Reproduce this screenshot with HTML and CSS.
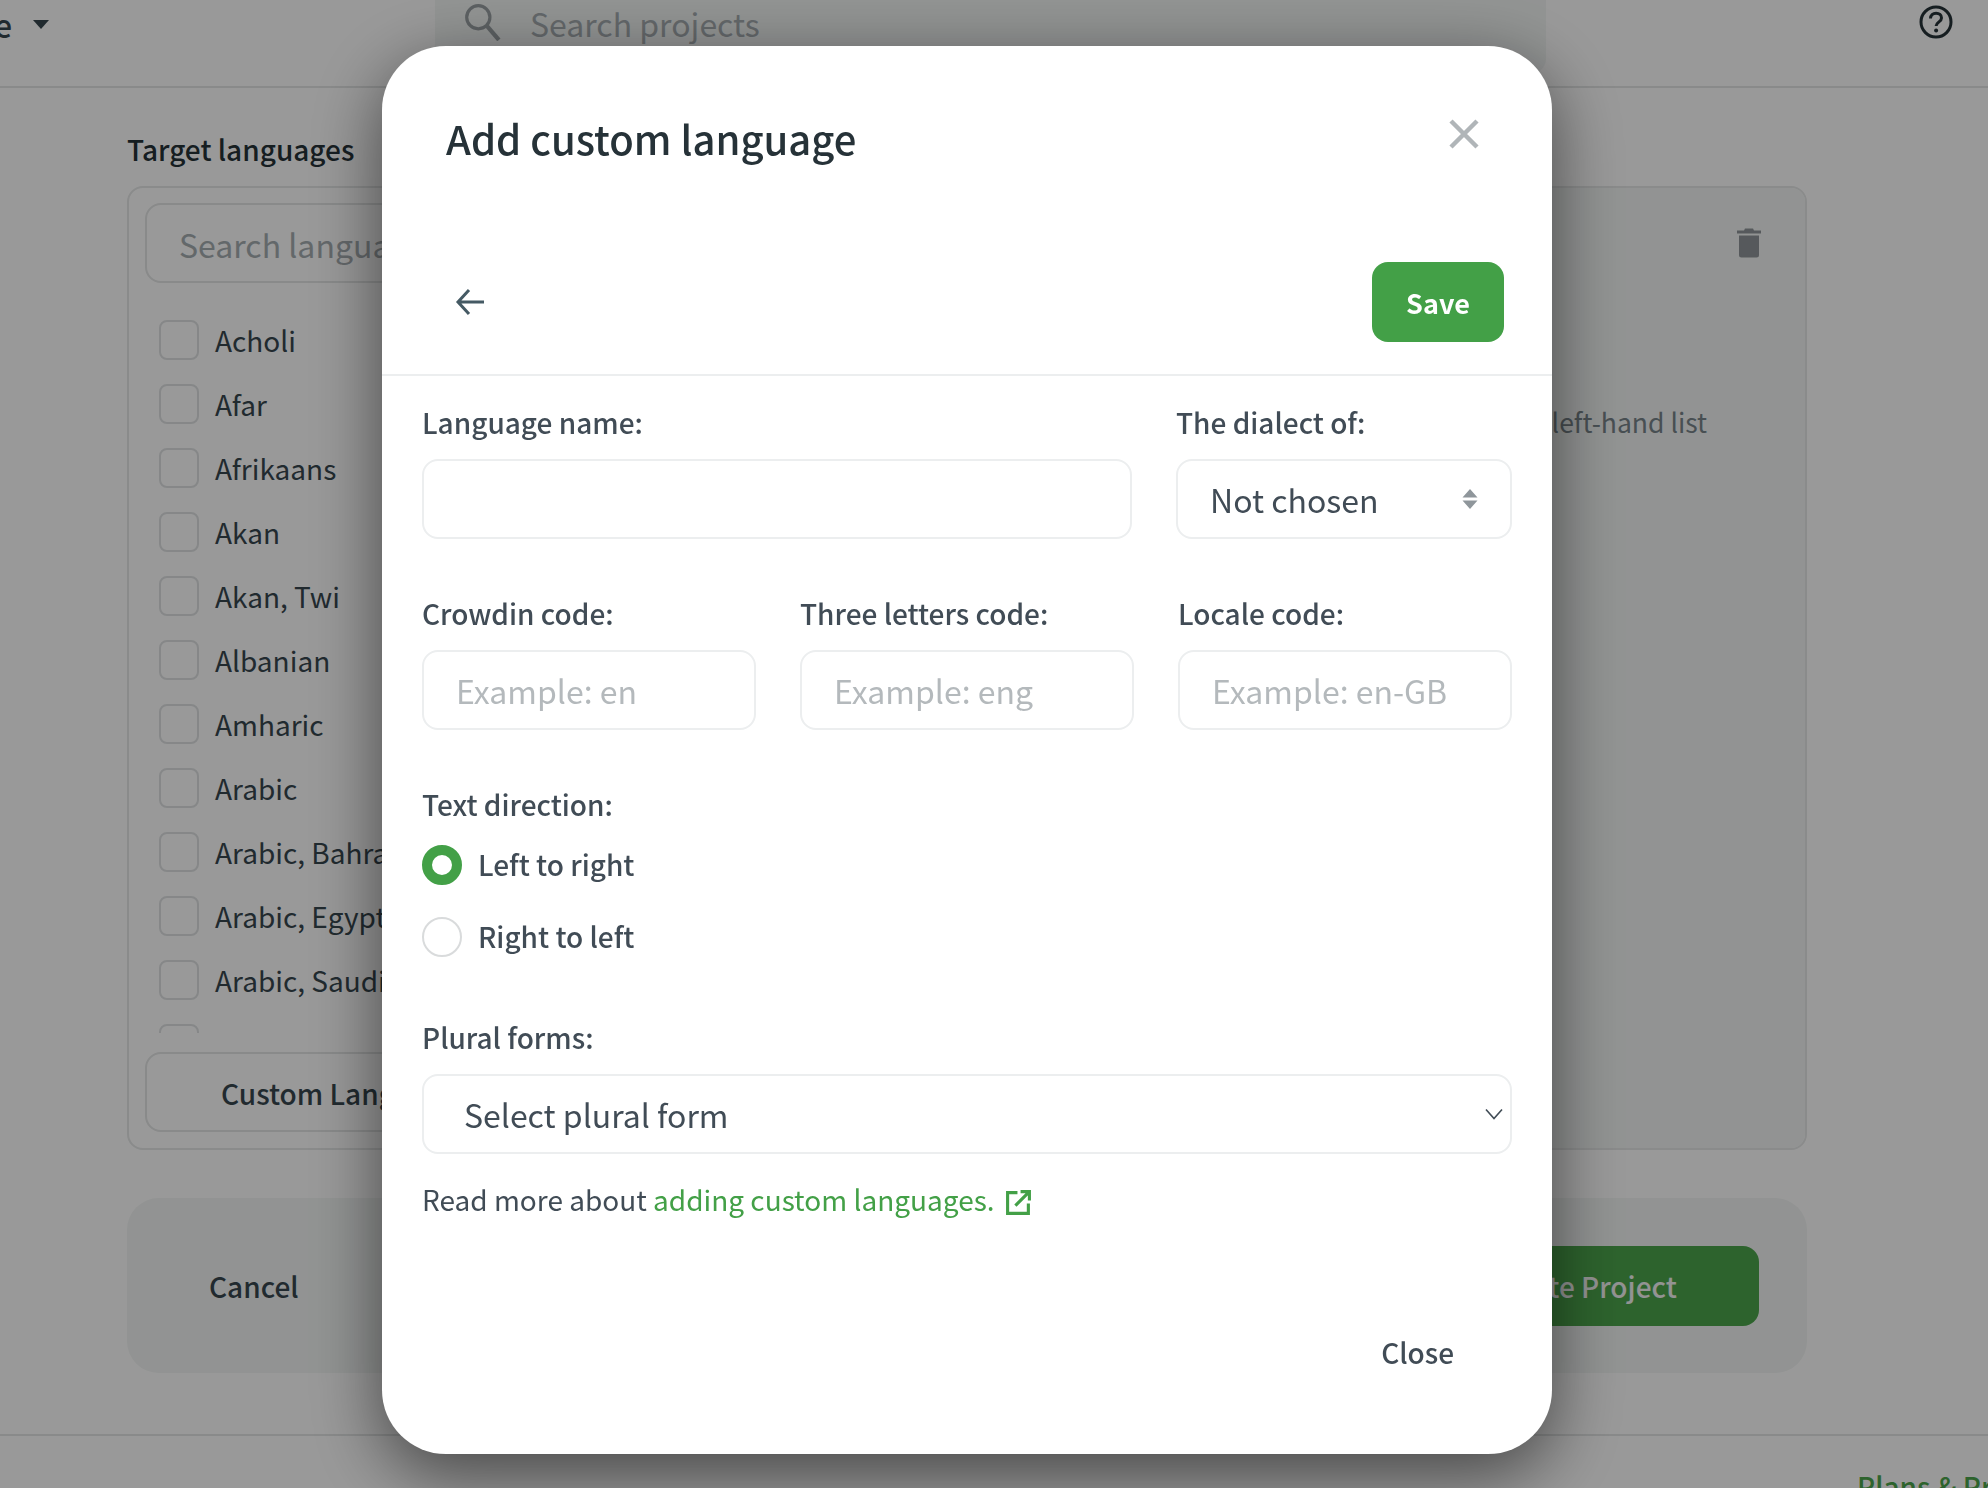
FILE: index.html
```html
<!DOCTYPE html>
<html lang="en">
<head>
<meta charset="utf-8">
<title>Add custom language</title>
<link rel="stylesheet" href="styles.css">
</head>
<body>
<div class="page">
  <header class="topbar">
    <div class="lang-menu"><span class="lang-text">e</span><span class="caret"></span></div>
    <div class="project-search">
      <svg class="search-icon" viewBox="0 0 36 36"><circle cx="14.5" cy="13.5" r="11" fill="none" stroke="currentColor" stroke-width="3"/><path d="M22 21l12 14" fill="none" stroke="currentColor" stroke-width="4"/></svg>
      <span>Search projects</span>
    </div>
    <svg class="help-icon" viewBox="0 0 34 34"><circle cx="17" cy="17" r="15" fill="none" stroke="currentColor" stroke-width="3"/><path d="M11.5 13.5c0-3.2 2.4-5.3 5.6-5.3 3.1 0 5.4 1.9 5.4 4.7 0 4.200-5.400 4.300-5.400 8.100" fill="none" stroke="currentColor" stroke-width="3"/><circle cx="17.100" cy="25.500" r="2" fill="currentColor"/></svg>
  </header>
  <main class="content">
    <h2 class="section-title">Target languages</h2>
    <section class="lang-panel">
      <div class="lang-col">
        <div class="lang-search">Search languages</div>
        <ul class="lang-list">
          <li><span class="box"></span>Acholi</li>
          <li><span class="box"></span>Afar</li>
          <li><span class="box"></span>Afrikaans</li>
          <li><span class="box"></span>Akan</li>
          <li><span class="box"></span>Akan, Twi</li>
          <li><span class="box"></span>Albanian</li>
          <li><span class="box"></span>Amharic</li>
          <li><span class="box"></span>Arabic</li>
          <li><span class="box"></span>Arabic, Bahrain</li>
          <li><span class="box"></span>Arabic, Egypt</li>
          <li><span class="box"></span>Arabic, Saudi Arabia</li>
          <li><span class="box"></span>Arabic, UAE</li>
        </ul>
        <div class="custom-btn">Custom Languages</div>
      </div>
      <div class="selected-col">
        <svg class="trash" viewBox="0 0 26 32"><path d="M9 2.500h8l1 2h7v3H1v-3h7zM3 9.500h20V29a2.500 2.500 0 0 1-2.500 2.500h-15A2.500 2.500 0 0 1 3 29z" fill="currentColor"/></svg>
        <p class="selected-hint">Select languages from the left-hand list</p>
      </div>
    </section>
    <div class="actions">
      <span class="cancel">Cancel</span>
      <span class="create">Create Project</span>
    </div>
  </main>
  <footer class="footer"><span class="plans">Plans &amp; Pricing</span></footer>
</div>

<div class="overlay"></div>

<div class="modal">
  <div class="modal-head">
    <h1 class="modal-title">Add custom language</h1>
    <svg class="modal-x" viewBox="0 0 30 30"><path d="M2 2l26 26M28 2L2 28" fill="none" stroke="currentColor" stroke-width="4.500"/></svg>
  </div>
  <div class="modal-tools">
    <svg class="back" viewBox="0 0 30 30"><path d="M29 15H3M14 3L3 15l11 12" fill="none" stroke="currentColor" stroke-width="3"/></svg>
    <span class="save">Save</span>
  </div>
  <form class="form">
    <div class="row-name">
      <div class="field"><label class="label">Language name:</label><div class="input"></div></div>
      <div class="field"><label class="label">The dialect of:</label>
        <div class="input value">Not chosen
          <svg class="updown" viewBox="0 0 16 20"><path d="M8 0l7.500 8.500H.5zM8 20l-7.500-8.500h15z" fill="currentColor"/></svg>
        </div>
      </div>
    </div>
    <div class="row-codes">
      <div class="field"><label class="label">Crowdin code:</label><div class="input ph">Example: en</div></div>
      <div class="field"><label class="label">Three letters code:</label><div class="input ph">Example: eng</div></div>
      <div class="field"><label class="label">Locale code:</label><div class="input ph">Example: en-GB</div></div>
    </div>
    <div class="direction">
      <div class="label">Text direction:</div>
      <div class="radio-row first"><span class="radio on"></span><span class="radio-text">Left to right</span></div>
      <div class="radio-row"><span class="radio"></span><span class="radio-text">Right to left</span></div>
    </div>
    <div class="plural">
      <label class="label">Plural forms:</label>
      <div class="input value wide">Select plural form
        <svg class="chev" viewBox="0 0 18 12"><path d="M1 1.500l8 9 8-9" fill="none" stroke="currentColor" stroke-width="1.600"/></svg>
      </div>
    </div>
    <p class="more">Read more about <a class="link">adding custom languages.</a>
      <svg class="ext" viewBox="0 0 26 26"><path d="M12 3.500H2.500v20h20V14M10 16L23 3M15 2.500h8.500V11" fill="none" stroke="currentColor" stroke-width="3"/></svg>
    </p>
  </form>
  <div class="modal-foot"><span class="close-btn">Close</span></div>
</div>
</body>
</html>
```
FILE: styles.css
```css
* { box-sizing: border-box; }
html, body { margin: 0; height: 1488px; overflow: hidden; }
body { font-family: "Noto Sans CJK SC", "Noto Sans", sans-serif; color: #37474f; background: #fff; }

.page { height: 1488px; display: flex; flex-direction: column; overflow: hidden; }

/* top bar */
.topbar { height: 88px; flex: none; display: flex; align-items: flex-start; border-bottom: 2px solid #e4e6e6; }
.lang-menu { width: 435px; display: flex; align-items: flex-start; gap: 20px; height: 50px; font-size: 32px; font-weight: 500; line-height: 48px; text-indent: -6px; }
.lang-text { color: #37474f; }
.caret { width: 0; height: 0; margin: 20px 0 0 1px; border-left: 8px solid transparent; border-right: 8px solid transparent; border-top: 9px solid #37474f; }
.project-search { width: 1111px; height: 73px; background: #f3f6f5; border-radius: 0 0 14px 14px; display: flex; align-items: flex-start; gap: 29px; padding-left: 28px; font-size: 32px; line-height: 46px; color: #a6adb1; }
.search-icon { width: 38px; height: 38px; margin-top: 3px; color: #9aa1a4; flex: none; }
.help-icon { width: 34px; height: 34px; margin: 5px 0 0 373px; color: #263238; flex: none; }

/* page content */
.content { flex: 1; padding: 0 181px 0 127px; display: flex; flex-direction: column; }
.section-title { margin: 41px 0 17px; font-size: 28px; line-height: 40px; font-weight: 500; color: #263238; }
.lang-panel { height: 964px; flex: none; display: flex; border: 2px solid #e6e8e8; border-radius: 16px; overflow: hidden; }
.lang-col { width: 430px; flex: none; padding: 15px 16px 16px; display: flex; flex-direction: column; }
.lang-search { height: 80px; flex: none; border: 2px solid #e4e6e6; border-radius: 16px; padding-left: 32px; font-size: 32px; line-height: 78px; color: #a6adb1; }
.lang-list { list-style: none; margin: 37px 0 0; padding: 0 0 0 14px; height: 713px; overflow: hidden; flex: none; }
.lang-list li { height: 64px; display: flex; align-items: flex-start; gap: 16px; font-size: 28px; line-height: 40px; color: #37474f; }
.box { width: 40px; height: 40px; flex: none; border: 2px solid #dfe2e3; border-radius: 8px; background: #fff; }
.custom-btn { height: 80px; flex: none; margin-top: 19px; border: 2px solid #e4e6e6; border-radius: 16px; padding-left: 74px; font-size: 28px; line-height: 78px; font-weight: 500; color: #37474f; white-space: nowrap; overflow: hidden; }
.selected-col { flex: 1; background: #f3f6f5; display: flex; flex-direction: column; align-items: flex-end; padding: 38px 43px 0 0; }
.trash { width: 26px; height: 32px; color: #90959a; flex: none; }
.selected-hint { margin: 144px 55px 0 0; font-size: 26.500px; line-height: 40px; color: #78848a; white-space: nowrap; }

.actions { height: 175px; flex: none; margin-top: 48px; background: #f3f6f5; border-radius: 32px; display: flex; align-items: center; justify-content: space-between; padding: 0 48px 0 82px; }
.cancel { font-size: 28px; font-weight: 500; line-height: 40px; color: #37474f; }
.create { width: 320px; height: 80px; border-radius: 16px; background: #4ca64c; color: #f5f5f5; font-size: 28px; font-weight: 500; line-height: 81px; padding-left: 49px; white-space: nowrap; }

.footer { height: 54px; flex: none; border-top: 2px solid #e4e6e6; display: flex; justify-content: flex-end; padding-top: 30px; }
.plans { font-size: 28px; line-height: 40px; color: #4ca64c; margin-right: -118px; white-space: nowrap; font-weight: 500; width: 249px; }

/* overlay and modal float over the page */
.overlay { position: fixed; inset: 0; background: rgba(0, 0, 0, .4); }
.modal { position: fixed; left: 382px; top: 46px; width: 1170px; height: 1408px; background: #fff; border-radius: 64px; box-shadow: 0 20px 70px rgba(0, 0, 0, .55); display: flex; flex-direction: column; }

.modal-head { height: 216px; flex: none; padding: 64px 72px 0 64px; display: flex; justify-content: space-between; align-items: flex-start; }
.modal-title { margin: 0; font-size: 40px; line-height: 56px; font-weight: 500; color: #263238; }
.modal-x { width: 30px; height: 30px; margin-top: 9px; margin-right: 1px; color: #b0b5b8; }
.modal-tools { height: 114px; flex: none; padding: 0 48px 0 73px; display: flex; justify-content: space-between; align-items: flex-start; border-bottom: 2px solid #eceeef; }
.back { width: 30px; height: 30px; margin-top: 25px; color: #455a64; }
.save { width: 132px; height: 80px; background: #43a047; border-radius: 16px; color: #fff; font-size: 27px; font-weight: 600; line-height: 81px; text-align: center; }

.form { padding: 26px 40px 0; display: flex; flex-direction: column; }
.row-name { display: grid; grid-template-columns: 710px 336px; column-gap: 44px; }
.row-codes { display: grid; grid-template-columns: repeat(3, 334px); column-gap: 44px; margin-top: 54px; }
.field { display: flex; flex-direction: column; }
.label { display: block; font-size: 28px; line-height: 40px; font-weight: 500; color: #414c56; }
.input { height: 80px; margin-top: 17px; border: 2px solid #eceeef; border-radius: 16px; padding-left: 32px; font-size: 32px; line-height: 76px; color: #414c56; background: #fff; }
.ph { color: #b4b9bc; }
.value { display: flex; align-items: center; justify-content: space-between; padding-right: 32px; }
.wide { padding-left: 40px; padding-right: 7px; margin-top: 17px; }
.updown { width: 16px; height: 20px; color: #8f969b; }
.chev { width: 18px; height: 12px; color: #414c56; }

.direction { margin-top: 54px; }
.radio-row { display: flex; align-items: center; gap: 16px; height: 40px; margin-top: 32px; font-size: 28px; font-weight: 500; color: #414c56; }
.radio-row.first { margin-top: 21px; }
.radio-text { line-height: 38px; height: 40px; }
.radio { width: 40px; height: 40px; border-radius: 50%; border: 2px solid #d9dbdc; flex: none; }
.radio.on { border: 10px solid #43a047; }

.plural { margin-top: 60px; }
.more { margin: 25px 0 0; font-size: 28px; line-height: 40px; color: #414c56; display: flex; align-items: center; white-space: pre; }
.link { color: #43a047; }
.ext { width: 27px; height: 27px; color: #43a047; margin: 6px 0 0 10px; }

.modal-foot { flex: 1; display: flex; justify-content: flex-end; padding: 113px 98px 0 0; }
.close-btn { font-size: 28px; line-height: 40px; font-weight: 500; color: #414c56; }
```
